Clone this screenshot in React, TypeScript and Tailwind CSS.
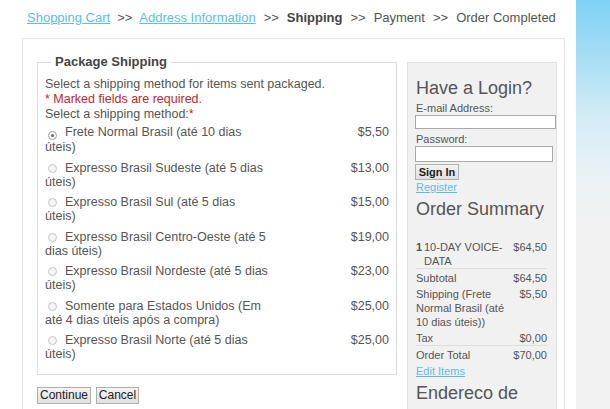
import React from 'react';

interface ShippingOption {
  lines: [string, string];
  price: string;
  selected?: boolean;
}

// the reference wraps every label onto two lines at these points
const options: ShippingOption[] = [
  { lines: ['Frete Normal Brasil (até 10 dias', 'úteis)'], price: '$5,50', selected: true },
  { lines: ['Expresso Brasil Sudeste (até 5 dias', 'úteis)'], price: '$13,00' },
  { lines: ['Expresso Brasil Sul (até 5 dias', 'úteis)'], price: '$15,00' },
  { lines: ['Expresso Brasil Centro-Oeste (até 5', 'dias úteis)'], price: '$19,00' },
  { lines: ['Expresso Brasil Nordeste (até 5 dias', 'úteis)'], price: '$23,00' },
  { lines: ['Somente para Estados Unidos (Em', 'até 4 dias úteis após a compra)'], price: '$25,00' },
  { lines: ['Expresso Brasil Norte (até 5 dias', 'úteis)'], price: '$25,00' },
];

const Radio: React.FC<{ checked?: boolean }> = ({ checked }) => (
  <span
    className={`inline-flex items-center justify-center w-[9px] h-[9px] rounded-full border align-[-1px] ml-[3px] mr-[8px] ${
      checked ? 'border-[#9a9a9a] bg-white' : 'border-[#c6c6c6] bg-[#f4f4f4]'
    }`}
  >
    {checked && <span className="block w-[3px] h-[3px] rounded-full bg-[#666]"></span>}
  </span>
);

const Crumbs: React.FC = () => (
  <div className="flex items-center pl-[27px] text-[13px] leading-[16px] text-[#555]">
    <a className="text-[#5cbde6] underline">Shopping Cart</a>
    <span className="mx-[7px]">&gt;&gt;</span>
    <a className="text-[#5cbde6] underline">Address Information</a>
    <span className="mx-[8px]">&gt;&gt;</span>
    <span className="font-bold text-[#444]">Shipping</span>
    <span className="mx-[8px]">&gt;&gt;</span>
    <span>Payment</span>
    <span className="mx-[8px]">&gt;&gt;</span>
    <span>Order Completed</span>
  </div>
);

const btn =
  "border border-[#b0b0b0] bg-[linear-gradient(to_bottom,#f4f4f4,#e0e0e0)] text-[#222] font-['Liberation_Sans',Arial,sans-serif]";

const ShippingForm: React.FC = () => (
  <div className="w-[360px] shrink-0">
    <fieldset className="border border-[#dcdcdc] px-[7px] pb-[9px]">
      <legend className="ml-[6px] px-[4px] text-[13px] leading-[16px] font-bold text-[#444]">
        Package Shipping
      </legend>
      <div className="pt-[7px] text-[12.5px] leading-[15px]">
        <p>Select a shipping method for items sent packaged.</p>
        <p className="text-[#c1272d]">* Marked fields are required.</p>
        <p>
          Select a shipping method:<span className="text-[#c1272d]">*</span>
        </p>
      </div>
      <div className="text-[12.5px] leading-[14px]">
        {options.map((opt) => (
          <div key={opt.lines[0]} className="flex justify-between py-[3.25px]">
            <label className="w-[240px]">
              <Radio checked={opt.selected} />
              {opt.lines[0]}
              <br />
              {opt.lines[1]}
            </label>
            <span>{opt.price}</span>
          </div>
        ))}
      </div>
    </fieldset>
    <div className="flex gap-[5px] mt-[12px]">
      <button className={`h-[17px] w-[54px] text-[12px] leading-[15px] ${btn}`}>Continue</button>
      <button className={`h-[17px] w-[43px] text-[12px] leading-[15px] ${btn}`}>Cancel</button>
    </div>
  </div>
);

const Sidebar: React.FC = () => (
  <div className="w-[150px] shrink-0 mt-[8px] bg-[#f1f1f1] border border-[#e2e2e2] pl-[8px] pr-[8px] pt-[13px] h-[400px]">
    <h2 className="text-[18px] leading-[24px] text-[#555]">Have a Login?</h2>
    <div className="text-[11px] leading-[13px] mt-[2px]">E-mail Address:</div>
    <input className="block -ml-[1px] w-[141px] h-[14px] bg-white border border-[#a9a9a9]" />
    <div className="text-[11px] leading-[13px] mt-[4px]">Password:</div>
    <input type="password" className="block -ml-[1px] w-[138px] h-[16px] bg-white border border-[#a9a9a9]" />
    <button className={`block -ml-[1px] mt-[2px] h-[16px] w-[44px] text-[11px] leading-[14px] font-bold ${btn}`}>
      Sign In
    </button>
    <a className="block text-[11px] leading-[13px] mt-[1px] text-[#5cbde6] underline">Register</a>
    <h2 className="text-[18px] leading-[24px] text-[#555] mt-[3px]">Order Summary</h2>
    <div className="text-[11px] leading-[14px] mt-[19px] pr-[1px]">
      <div className="flex border-b border-[#dedede]">
        <div className="w-[92px] flex">
          <span className="w-[8px] font-bold">1</span>
          <span className="w-[82px]">10-DAY VOICE-DATA</span>
        </div>
        <div className="flex-1 text-right">$64,50</div>
      </div>
      <div className="flex pt-[2px]">
        <div className="w-[92px]">Subtotal</div>
        <div className="flex-1 text-right">$64,50</div>
      </div>
      <div className="flex pt-[2px]">
        <div className="w-[92px]">Shipping (Frete Normal Brasil (até 10 dias úteis))</div>
        <div className="flex-1 text-right">$5,50</div>
      </div>
      <div className="flex pt-[2px] border-b border-[#dedede]">
        <div className="w-[92px]">Tax</div>
        <div className="flex-1 text-right">$0,00</div>
      </div>
      <div className="flex pt-[2px]">
        <div className="w-[92px]">Order Total</div>
        <div className="flex-1 text-right">$70,00</div>
      </div>
    </div>
    <a className="block text-[11px] leading-[13px] mt-[3px] text-[#5cbde6] underline">Edit Items</a>
    <h2 className="text-[18px] leading-[24px] text-[#555] mt-[3px]">Endereco de</h2>
  </div>
);

const App: React.FC = () => {
  return (
    <div className="flex w-[610px] h-[409px] overflow-hidden bg-white text-[#555] font-['Liberation_Sans',Arial,sans-serif]">
      <div className="w-[576px] shrink-0 pt-[10px]">
        <Crumbs />
        <div className="ml-[22px] w-[543px] mt-[12px] border border-[#e6e6e6] pl-[14px] pr-[7px] pt-[15px] h-[420px]">
          <div className="flex items-start gap-[10px]">
            <ShippingForm />
            <Sidebar />
          </div>
        </div>
      </div>
      <div className="flex-1 bg-[linear-gradient(to_bottom,#7ed2f6_0px,#a9def5_60px,#d2ecf6_115px,#e8f2f6_170px,#f2f2f2_230px)]"></div>
    </div>
  );
};

export default App;
